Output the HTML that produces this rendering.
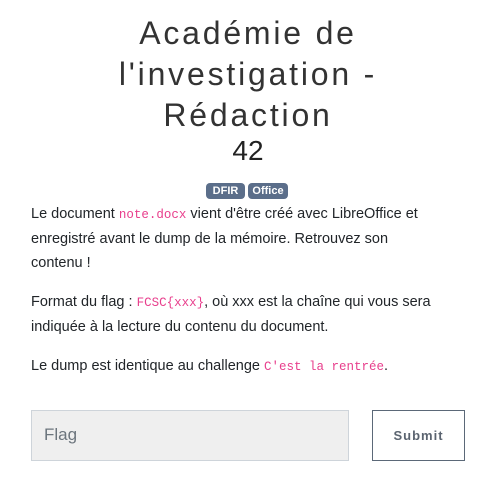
<!DOCTYPE html>
<html><head><meta charset="utf-8"><style>
body{margin:0;width:496px;height:504px;background:#fff;font-family:"Liberation Sans",sans-serif;color:#212529;position:relative;overflow:hidden}
.t{position:absolute;left:0;width:496px;text-align:center;font-size:32px;font-weight:300;letter-spacing:2.8px;line-height:41px;top:13px;color:#333}
.v{position:absolute;left:0;width:496px;text-align:center;font-size:28px;top:135px;color:#222}
.b{position:absolute;top:183px;height:16px;background:#5b6e8a;color:#fff;font-size:11px;font-weight:bold;border-radius:4px;line-height:16px;text-align:center}
p{position:absolute;left:31px;margin:0;font-size:14.5px;line-height:24px;width:460px;white-space:nowrap}
code{font-family:"Liberation Mono",monospace;color:#e83e8c;font-size:12.5px}
.in{position:absolute;left:31px;top:410px;width:318px;height:51px;background:#efefef;border:1px solid #ced4da;box-sizing:border-box;font-size:17px;color:#6c757d;padding-left:12px;line-height:47px}
.sb{position:absolute;left:372px;top:410px;width:93px;height:51px;border:1px solid #5b6878;box-sizing:border-box;text-align:center;line-height:49px;font-size:13px;font-weight:bold;letter-spacing:1px;color:#5b6470}
</style></head><body>
<div class="t">Académie de<br>l'investigation -<br>Rédaction</div>
<div class="v">42</div>
<div class="b" style="left:206px;width:39px">DFIR</div>
<div class="b" style="left:248px;width:40px">Office</div>
<p style="top:202px">Le document <code>note.docx</code> vient d'être créé avec LibreOffice et<br>enregistré avant le dump de la mémoire. Retrouvez son<br>contenu !</p>
<p style="top:290px">Format du flag : <code>FCSC{xxx}</code>, où xxx est la chaîne qui vous sera<br>indiquée à la lecture du contenu du document.</p>
<p style="top:354px">Le dump est identique au challenge <code>C'est la rentrée</code>.</p>
<div class="in">Flag</div>
<div class="sb">Submit</div>
</body></html>
